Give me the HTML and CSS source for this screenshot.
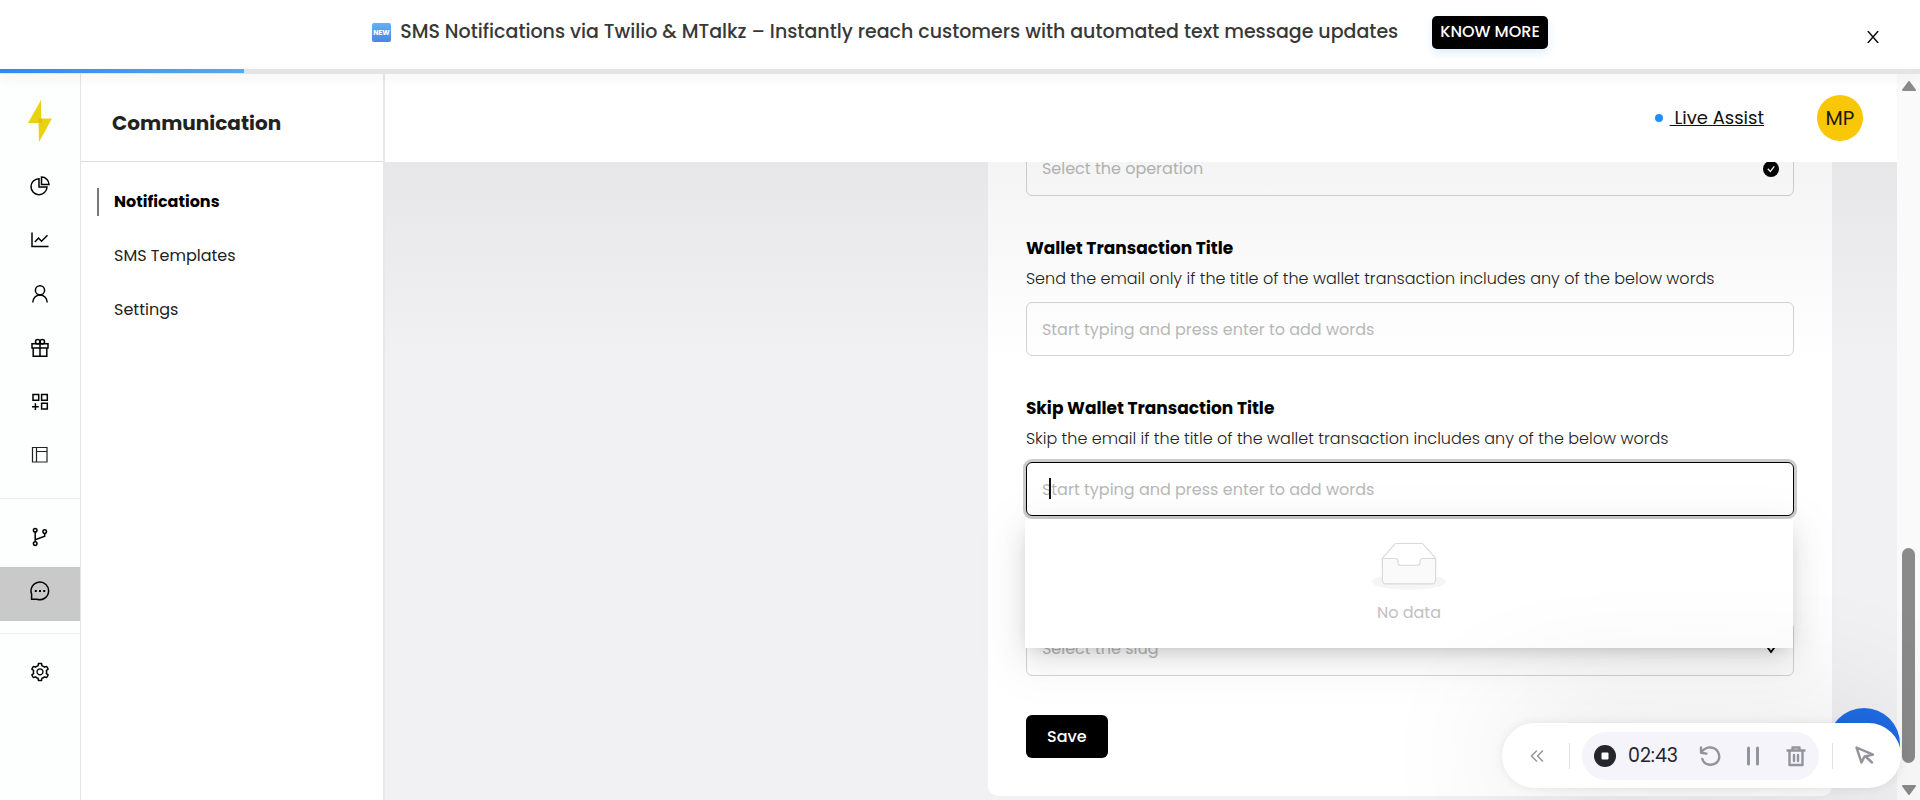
FILE: index.html
```html
<!DOCTYPE html>
<html lang="en">
<head>
<meta charset="utf-8" />
<meta name="viewport" content="width=device-width, initial-scale=1" />
<title>Communication - Notifications</title>
<link rel="stylesheet" href="styles.css">
</head>
<body>

<div class="banner">
  <svg class="banner-new" viewBox="0 0 19 19" aria-hidden="true">
    <defs>
      <linearGradient id="newFill" x1="0" y1="0" x2="0" y2="1">
        <stop offset="0" stop-color="#5fb2f8" />
        <stop offset="1" stop-color="#4a86e4" />
      </linearGradient>
    </defs>
    <rect width="19" height="19" rx="2" fill="url(#newFill)" />
    <text x="9.5" y="12" text-anchor="middle" class="banner-new-text">NEW</text>
  </svg>
  <span class="banner-text">SMS Notifications via Twilio &amp; MTalkz – Instantly reach customers with automated text message updates</span>
  <button class="banner-more" type="button">KNOW MORE</button>
  <button class="banner-close" type="button" aria-label="Close">
    <svg viewBox="0 0 12 12"><path d="M.8 0l10.4 12M11.2 0L.8 12" /></svg>
  </button>
</div>
<div class="progress"><div class="progress-bar"></div></div>

<div class="app">

  <nav class="rail" aria-label="Main">
    <a class="rail-logo" href="#" aria-label="Home">
      <svg viewBox="0 0 24 42"><path d="M13 0L0 23h10.500L11 42 24 18.500H13z" fill="#e8d30e" /><path d="M10.500 18.500H14v4.500h-3.500z" fill="#e8b923" /></svg>
    </a>
    <a class="rail-item" href="#" aria-label="Dashboard">
      <svg viewBox="0 0 20 20"><path d="M9 2.700a8 8 0 1 0 8 8.300H9z" /><path d="M11.500 1v7.500H19A7.500 7.500 0 0 0 11.500 1z" /></svg>
    </a>
    <a class="rail-item" href="#" aria-label="Analytics">
      <svg viewBox="0 0 20 20"><path d="M2 2.500v14h16.500" /><path d="M4.800 12l3.700-4 3 3.200 6-6" /></svg>
    </a>
    <a class="rail-item" href="#" aria-label="Customers">
      <svg viewBox="0 0 20 20"><circle cx="10" cy="6.300" r="4.600" /><path d="M2.800 18.500c.2-4.400 3.200-7.500 7.200-7.500s7 3.100 7.200 7.500" /></svg>
    </a>
    <a class="rail-item" href="#" aria-label="Rewards">
      <svg viewBox="0 0 20 20"><path d="M2 5.800h16v4.200H2zM3.200 10v8.300h13.600V10M10 5.800v12.500" /><circle cx="7.700" cy="3.700" r="2.200" /><circle cx="12.300" cy="3.700" r="2.200" /></svg>
    </a>
    <a class="rail-item" href="#" aria-label="Apps">
      <svg viewBox="0 0 20 20"><path d="M3 2.500h5.700v5.700H3zM11.600 2.500h5.700v5.700h-5.700zM11.600 11.300h5.700V17h-5.700zM5.400 11.300v6.800M2 14.700h6.800" /></svg>
    </a>
    <a class="rail-item" href="#" aria-label="Pages">
      <svg class="thin" viewBox="0 0 20 20"><path d="M2.500 1.500h14.500v14.500h-14.500zM6.500 1.500v14.500M6.500 5.500h10.500" /></svg>
    </a>
    <div class="rail-line"></div>
    <a class="rail-item" href="#" aria-label="Workflows">
      <svg viewBox="0 0 20 20"><circle cx="5.200" cy="3.300" r="1.800" /><circle cx="14.700" cy="4.600" r="1.800" /><circle cx="5.200" cy="16.600" r="1.800" /><path d="M5.200 5.200v9.500M14.700 6.500v2.800L5.200 12.800" /></svg>
    </a>
    <a class="rail-item active" href="#" aria-label="Communication">
      <svg viewBox="0 0 20 20"><path d="M1.600 18.200V13A8.800 8.800 0 1 1 7 18.200z" /><path class="dots" d="M4.800 9h2v2h-2zM9 9h2v2H9zM13.200 9h2v2h-2z" /></svg>
    </a>
    <div class="rail-line"></div>
    <a class="rail-item" href="#" aria-label="Settings">
      <svg class="solid" viewBox="32 32 960 960"><path d="M924.800 625.700l-65.500-56c3.100-19 4.700-38.400 4.700-57.800s-1.600-38.800-4.700-57.800l65.500-56a32.030 32.030 0 009.300-35.200l-.9-2.600a443.740 443.740 0 00-79.700-137.900l-1.800-2.100a32.120 32.120 0 00-35.100-9.500l-81.300 28.900c-30-24.600-63.500-44-99.700-57.600l-15.700-85a32.050 32.050 0 00-25.800-25.700l-2.700-.5c-52.100-9.400-106.900-9.400-159 0l-2.700.5a32.050 32.050 0 00-25.800 25.700l-15.800 85.400a351.860 351.860 0 00-99 57.400l-81.900-29.100a32 32 0 00-35.100 9.500l-1.800 2.100a446.020 446.020 0 00-79.700 137.900l-.9 2.600c-4.500 12.500-.8 26.500 9.300 35.200l66.300 56.600c-3.100 18.800-4.600 38-4.600 57.100 0 19.200 1.500 38.400 4.600 57.100L99 625.500a32.030 32.030 0 00-9.300 35.200l.9 2.600c18.100 50.400 44.900 96.900 79.700 137.900l1.800 2.100a32.120 32.120 0 0035.100 9.500l81.900-29.100c29.800 24.500 63.100 43.900 99 57.400l15.800 85.400a32.050 32.050 0 0025.800 25.700l2.700.5a449.400 449.400 0 00159 0l2.700-.5a32.050 32.050 0 0025.800-25.700l15.700-85a350 350 0 0099.700-57.600l81.300 28.900a32 32 0 0035.100-9.500l1.800-2.100c34.800-41.100 61.600-87.500 79.700-137.900l.9-2.600c4.500-12.300.8-26.300-9.300-35zM788.300 465.900c2.500 15.100 3.800 30.600 3.800 46.100s-1.300 31-3.800 46.100l-6.600 40.100 74.700 63.900a370.030 370.030 0 01-42.600 73.600L721 702.800l-31.400 25.800c-23.900 19.600-50.500 35-79.300 45.800l-38.100 14.300-17.900 97a377.500 377.500 0 01-85 0l-17.900-97.200-37.800-14.500c-28.500-10.800-55-26.200-78.700-45.700l-31.400-25.900-93.400 33.200c-17-22.900-31.200-47.600-42.600-73.600l75.500-64.500-6.500-40c-2.400-14.900-3.700-30.300-3.700-45.500 0-15.300 1.200-30.600 3.700-45.500l6.500-40-75.500-64.500c11.300-26.100 25.600-50.700 42.600-73.600l93.400 33.200 31.400-25.900c23.700-19.500 50.200-34.900 78.700-45.700l37.900-14.300 17.900-97.200c28.100-3.200 56.800-3.200 85 0l17.900 97 38.100 14.300c28.700 10.800 55.400 26.200 79.300 45.800l31.400 25.800 92.800-32.900c17 22.900 31.200 47.600 42.600 73.600L781.800 426l6.500 39.900zM512 326c-97.200 0-176 78.800-176 176s78.800 176 176 176 176-78.800 176-176-78.800-176-176-176zm79.200 255.200A111.600 111.600 0 01512 614c-29.900 0-58-11.700-79.200-32.800A111.600 111.600 0 01400 502c0-29.900 11.700-58 32.800-79.200C454 401.600 482.100 390 512 390c29.900 0 58 11.600 79.200 32.800A111.600 111.600 0 01624 502c0 29.900-11.700 58-32.800 79.200z" /></svg>
    </a>
  </nav>

  <aside class="side">
    <h1 class="side-title">Communication</h1>
    <nav class="side-nav" aria-label="Communication">
      <a class="side-item active" href="#">Notifications</a>
      <a class="side-item" href="#">SMS Templates</a>
      <a class="side-item" href="#">Settings</a>
    </nav>
  </aside>

  <main class="main">
    <header class="header">
      <span class="live"><span class="live-dot"></span><a class="live-link" href="#">&nbsp;Live Assist</a></span>
      <span class="avatar">MP</span>
    </header>

    <div class="content">
      <form class="card">
        <div class="field">
          <div class="control">
            <select class="input" aria-label="Operation"><option>Select the operation</option></select>
            <svg class="control-icon check" viewBox="0 0 16 16"><circle cx="8" cy="8" r="8" /><path d="M4.800 7.800L7.300 10.500 11.300 5.300" /></svg>
          </div>
        </div>

        <div class="field">
          <label class="field-label" for="title">Wallet Transaction Title</label>
          <p class="field-help">Send the email only if the title of the wallet transaction includes any of the below words</p>
          <div class="control">
            <input class="input" id="title" type="text" placeholder="Start typing and press enter to add words" />
          </div>
        </div>

        <div class="field">
          <label class="field-label" for="skip">Skip Wallet Transaction Title</label>
          <p class="field-help">Skip the email if the title of the wallet transaction includes any of the below words</p>
          <div class="control">
            <input class="input focused" id="skip" type="text" placeholder="Start typing and press enter to add words" />
            <span class="caret"></span>
            <div class="dropdown">
              <svg class="empty" viewBox="0 0 64 41">
                <g transform="translate(0 1)" fill="none" fill-rule="evenodd">
                  <ellipse fill="#f5f5f5" cx="32" cy="33" rx="32" ry="7" />
                  <g stroke="#d9d9d9">
                    <path d="M55 12.760L44.854 1.258C44.367.474 43.656 0 42.907 0H21.093c-.749 0-1.460.474-1.947 1.257L9 12.761V22h46v-9.240z" fill="#fff" />
                    <path d="M41.613 15.931c0-1.605.994-2.930 2.227-2.931H55v18.137C55 33.260 53.680 35 52.050 35h-40.100C10.320 35 9 33.259 9 31.137V13h11.160c1.233 0 2.227 1.323 2.227 2.928v.022c0 1.605 1.005 2.901 2.237 2.901h14.752c1.232 0 2.237-1.308 2.237-2.913v-.007z" fill="#fafafa" />
                  </g>
                </g>
              </svg>
              <span>No data</span>
            </div>
          </div>
        </div>

        <div class="field slug">
          <div class="control">
            <select class="input" aria-label="Slug"><option>Select the slug</option></select>
            <svg class="control-icon" viewBox="0 0 16 16"><path d="M3.500 5L8 11l4.500-6" /></svg>
          </div>
        </div>

        <button class="save" type="button">Save</button>
      </form>
    </div>
  </main>

  <div class="scrollbar" aria-hidden="true">
    <svg viewBox="0 0 14 10"><path d="M7 1l6 8H1z" /></svg>
    <div class="scroll-track"><div class="scroll-thumb"></div></div>
    <svg viewBox="0 0 14 10"><path d="M7 9L1 1h12z" /></svg>
  </div>
</div>

<button class="chat" type="button" aria-label="Open chat"></button>

<div class="recorder">
  <button class="rec-btn collapse" type="button" aria-label="Collapse">
    <svg viewBox="0 0 14 12"><path d="M6.500 1L1.500 6l5 5M12.500 1l-5 5 5 5" /></svg>
  </button>
  <span class="rec-line"></span>
  <div class="rec-group">
    <button class="rec-btn" type="button" aria-label="Stop">
      <svg viewBox="0 0 22 22"><circle cx="11" cy="11" r="11" fill="#25252d" stroke="none" /><rect x="7.500" y="7.500" width="7" height="7" rx="1" fill="#fff" stroke="none" /></svg>
    </button>
    <span class="rec-time">02:43</span>
    <button class="rec-btn" type="button" aria-label="Restart">
      <svg viewBox="0 0 22 22"><path d="M3 6.500C8 .5 16 1.500 19 7c3.500 7-1 12.500-7 12.700-4.500 0-7.500-2-8.700-5.700M2 2.500v5.300l5.500.8" /></svg>
    </button>
    <button class="rec-btn" type="button" aria-label="Pause">
      <svg class="bars" viewBox="0 0 22 22"><path d="M6.500 3v16M15.500 3v16" /></svg>
    </button>
    <button class="rec-btn" type="button" aria-label="Delete">
      <svg viewBox="0 0 22 22"><path d="M2.500 5.500h17M7.500 5V2.500h7V5M4.500 6v14h13V6M9 10v6M13 10v6" /></svg>
    </button>
  </div>
  <span class="rec-line"></span>
  <button class="rec-btn" type="button" aria-label="Pointer">
    <svg viewBox="0 0 22 22"><path d="M2.500 2.500l5 15 3-6 8.500-1.800zM11.500 11.500l6.500 6" /></svg>
  </button>
</div>

</body>
</html>
```
FILE: styles.css
```css
* {
  box-sizing: border-box;
}
html, body {
  margin: 0;
  padding: 0;
  height: 100%;
}
body {
  display: flex;
  flex-direction: column;
  position: relative;
  overflow: hidden;
  font-family: Poppins, Inter, "Open Sans", sans-serif;
  font-size: 16px;
  line-height: 24px;
  color: #222;
}
button, input, select {
  font: inherit;
}
button {
  border: 0;
  padding: 0;
  cursor: pointer;
}
a {
  color: inherit;
  text-decoration: none;
}
svg {
  display: block;
  flex: none;
}

/* announcement */
.banner {
  position: relative;
  display: flex;
  align-items: center;
  justify-content: center;
  height: 69px;
  flex: none;
  padding-bottom: 5px;
  background: #fff;
}
.banner-new {
  width: 19px;
  height: 19px;
  margin-right: 9px;
}
.banner-new-text {
  font-size: 7px;
  font-weight: 700;
  fill: #fff;
}
.banner-text {
  font-size: 19px;
  font-weight: 500;
  color: #383838;
}
.banner-more {
  height: 33px;
  margin-left: 34px;
  padding: 0 8px;
  border-radius: 5px;
  background: #000;
  color: #fff;
  font-size: 16px;
  font-weight: 500;
  box-shadow: 0 4px 8px rgba(24, 144, 255, .15);
}
.banner-close {
  position: absolute;
  top: 25px;
  right: 35px;
  width: 24px;
  height: 24px;
  background: none;
}
.banner-close svg {
  width: 12px;
  height: 12px;
  margin: 0 auto;
  fill: none;
  stroke: #111;
  stroke-width: 1.5;
}
.progress {
  position: relative;
  z-index: 3;
  height: 5px;
  flex: none;
  background: #e4e4e4;
  box-shadow: 0 4px 12px rgba(0, 0, 0, .07);
}
.progress-bar {
  width: 244px;
  height: 4px;
  background: linear-gradient(90deg, #2a8cec, #55a9f3);
}

.app {
  display: flex;
  flex: 1;
  min-height: 0;
}

/* icon rail */
.rail {
  width: 81px;
  flex: none;
  border-right: 1px solid #e4e4e6;
  background: #fdfefe;
}
.rail-logo {
  display: flex;
  justify-content: center;
  height: 88px;
  padding-top: 26px;
}
.rail-logo svg {
  width: 24px;
  height: 42px;
}
.rail-item {
  display: flex;
  align-items: center;
  justify-content: center;
  height: 54px;
  padding: 0 1px 6px 0;
}
.rail-item.active {
  background: #c9c9c9;
}
.rail-item svg {
  width: 20px;
  height: 20px;
  fill: none;
  stroke: #000;
  stroke-width: 1.5;
}
.rail-item svg.thin {
  stroke: #222;
  stroke-width: 1.2;
}
.rail-item svg.solid {
  fill: #000;
  stroke: none;
}
.rail-item .dots {
  fill: #000;
  stroke: none;
}
.rail-line {
  height: 1px;
  margin: 12px 0 14px;
  background: #eaeeec;
}

/* section menu */
.side {
  width: 304px;
  flex: none;
  border-right: 2px solid #e8e8ea;
  background: #fff;
}
.side-title {
  display: flex;
  align-items: center;
  height: 88px;
  margin: 0;
  padding: 10px 0 0 31px;
  border-bottom: 1px solid #dcdcdc;
  font-size: 20px;
  font-weight: 700;
}
.side-nav {
  display: flex;
  flex-direction: column;
  gap: 26px;
  padding: 26px 16px;
}
.side-item {
  padding: 0 15px;
  border-left: 2px solid transparent;
  line-height: 28px;
}
.side-item.active {
  border-color: #777;
  color: #000;
  font-weight: 700;
}

/* page */
.main {
  display: flex;
  flex: 1;
  flex-direction: column;
  min-width: 0;
}
.header {
  display: flex;
  align-items: center;
  justify-content: flex-end;
  gap: 53px;
  height: 88px;
  flex: none;
  padding-right: 34px;
  background: #fff;
}
.live {
  display: flex;
  align-items: center;
  gap: 7px;
  color: #111;
  font-size: 18px;
}
.live-dot {
  width: 8px;
  height: 8px;
  border-radius: 50%;
  background: #2090fa;
}
.live-link {
  text-decoration: underline;
}
.avatar {
  width: 46px;
  height: 46px;
  border-radius: 50%;
  background: #f9c706;
  color: #1c1a10;
  font-size: 20px;
  line-height: 46px;
  text-align: center;
}
.content {
  position: relative;
  display: grid;
  flex: 1;
  grid-template-columns: 5fr 7fr;
  align-content: end;
  min-height: 0;
  overflow: hidden;
  padding: 0 65px 4px 0;
  background: #f1f1f4;
}
.content::after {
  content: "";
  position: absolute;
  top: 0;
  left: 0;
  right: 0;
  height: 200px;
  background: linear-gradient(rgba(0, 0, 0, .045), rgba(0, 0, 0, 0));
  pointer-events: none;
}
.card {
  display: flex;
  grid-column: 2;
  flex-direction: column;
  gap: 39px;
  padding: 38px;
  border-radius: 10px;
  background: #fff;
}
.field {
  display: flex;
  flex-direction: column;
}
.field.slug {
  padding-top: 67px;
}
.field-label {
  color: #000;
  font-size: 17px;
  font-weight: 700;
  line-height: 26px;
}
.field-help {
  margin: 6px 0 11px;
  font-weight: 300;
}
.control {
  position: relative;
}
.input {
  display: block;
  width: 100%;
  height: 54px;
  padding: 0 15px;
  border: 1px solid #d4d4d4;
  border-radius: 6px;
  outline: 0;
  background: transparent;
  appearance: none;
}
select.input,
.input::placeholder {
  color: #b8b8b8;
}
.input.focused {
  border-color: #000;
  box-shadow: 0 0 0 3px rgba(0, 0, 0, .2);
}
.caret {
  position: absolute;
  top: 16px;
  left: 23px;
  width: 2px;
  height: 21px;
  background: #111;
}
.control-icon {
  position: absolute;
  top: 19px;
  right: 15px;
  width: 16px;
  height: 16px;
  fill: none;
  stroke: #000;
  stroke-width: 1.8;
}
.control-icon.check circle {
  fill: #000;
  stroke: none;
}
.control-icon.check path {
  stroke: #fff;
  stroke-width: 1.3;
}
.dropdown {
  position: absolute;
  z-index: 1;
  top: 57px;
  left: -1px;
  right: 1px;
  display: flex;
  flex-direction: column;
  align-items: center;
  gap: 11px;
  height: 129px;
  padding-top: 23px;
  background: #fff;
  color: #bfbfbf;
  box-shadow: 0 9px 28px rgba(0, 0, 0, .1), 0 6px 16px -8px rgba(0, 0, 0, .2), 0 12px 48px 16px rgba(0, 0, 0, .03);
}
.empty {
  width: 74px;
  height: 48px;
}
.save {
  align-self: flex-start;
  width: 82px;
  height: 43px;
  border-radius: 6px;
  background: #000;
  color: #fff;
  font-weight: 500;
}

.scrollbar {
  position: relative;
  z-index: 2;
  display: flex;
  flex-direction: column;
  align-items: center;
  width: 23px;
  flex: none;
  padding: 7px 0 5px;
  background: #fafafa;
}
.scrollbar svg {
  width: 14px;
  height: 10px;
  fill: #8a8a8a;
  stroke: #8a8a8a;
  stroke-width: 2;
  stroke-linejoin: round;
}
.scroll-track {
  display: flex;
  flex: 1;
  flex-direction: column;
  justify-content: flex-end;
  padding-bottom: 22px;
}
.scroll-thumb {
  width: 13px;
  height: 32%;
  border-radius: 7px;
  background: #8a8a8a;
}

/* floating widgets */
.chat {
  position: absolute;
  z-index: 3;
  right: 20px;
  bottom: 20px;
  width: 72px;
  height: 72px;
  border-radius: 50%;
  background: #1f6ce6;
}
.recorder {
  position: absolute;
  z-index: 4;
  right: 19px;
  bottom: 12px;
  display: flex;
  align-items: center;
  width: 399px;
  height: 65px;
  padding-left: 28px;
  border-radius: 33px;
  background: #fff;
  box-shadow: 0 0 10px rgba(0, 0, 0, .08), 0 0 140px rgba(0, 0, 0, .16);
}
.rec-btn {
  background: none;
}
.rec-btn svg {
  width: 22px;
  height: 22px;
  fill: none;
  stroke: #93939c;
  stroke-width: 2.4;
  stroke-linecap: round;
  stroke-linejoin: round;
}
.rec-btn svg.bars {
  stroke-width: 3;
}
.rec-btn.collapse svg {
  width: 14px;
  height: 12px;
  stroke-width: 1.5;
}
.rec-line {
  width: 1px;
  height: 26px;
  margin: 0 12px 0 25px;
  background: #e3e0e6;
}
.rec-group {
  display: flex;
  align-items: center;
  gap: 21px;
  height: 48px;
  padding: 0 12px;
  border-radius: 24px;
  background: #f5f4fa;
}
.rec-group + .rec-line {
  margin: 0 21px 0 13px;
}
.rec-time {
  margin-left: -9px;
  color: #25252d;
  font-size: 19px;
}
```
